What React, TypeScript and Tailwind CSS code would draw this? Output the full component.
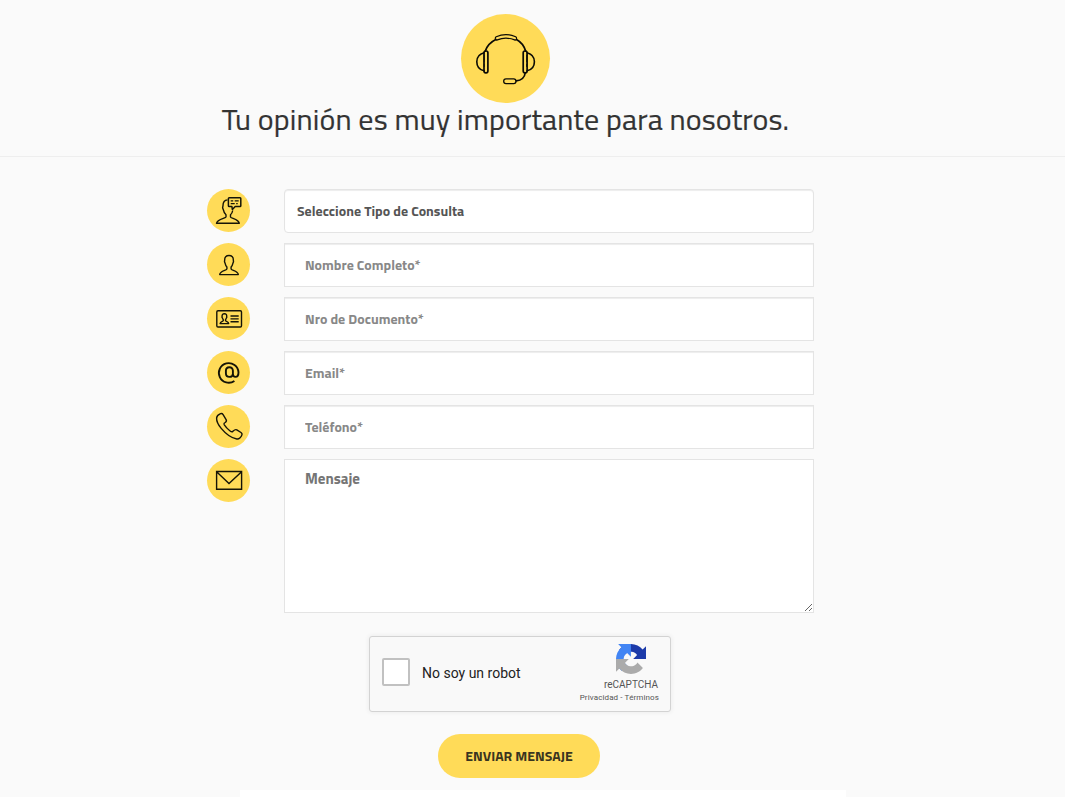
import type { ReactNode } from 'react';

function Badge({ children }: { children: ReactNode }) {
  return (
    <div className="size-[43px] shrink-0 rounded-full bg-[#ffdb58]">
      <svg viewBox="0 0 43 43" className="size-full" fill="none" stroke="#151407" strokeWidth="1.4" strokeLinejoin="round">
        {children}
      </svg>
    </div>
  );
}

const icons = {
  consult: (
    <>
      <path d="M20.500 10.900c-3 .3-4.500 2.200-4.500 5.700l-.4 2.200.9 2.400c.3 2.100 1.100 3.400 2.500 4.500v2.200c0 1.300-8.900 2.200-9.500 6.400h22.800c-.6-4.200-8.800-5-8.800-6.400v-2.200c1.200-1 1.900-2.400 2.200-4.200" />
      <path d="M22.200 8.700h10.800q.8 0 .8.800v7.300q0 .8-.8.800h-4.800l-2.800 2.900-.5-2.900h-2.700q-.8 0-.8-.8V9.500q0-.8.800-.8Z" strokeWidth="1.5" />
      <path d="M23.700 11.900h2.500m1.500 0h4M23.700 14.600h4m1.500 0h1.500" strokeWidth="1.2" />
    </>
  ),
  person: (
    <path d="M22 12.500c-3 0-4.400 1.800-4.300 4.300l-.2 2 .7 1.800c.3 1.500.8 2.500 1.700 3.400v2c0 1.500-6.900 1.500-7.200 5.600h18.600c-.3-4.100-7.200-4.100-7.200-5.600v-2c.9-.9 1.400-1.900 1.700-3.400l.7-1.800-.2-2c.1-2.500-1.300-4.300-4.300-4.300Z" />
  ),
  card: (
    <>
      <rect x="9.800" y="13.700" width="24.700" height="16.300" rx="1.200" />
      <path d="M17.400 16.700c-1.700 0-2.400 1-2.300 2.500l-.1 1 .5 1c.2.800.4 1.200.8 1.600v.8c0 .8-3 .8-3.200 3h8.600c-.2-2.200-3.200-2.200-3.200-3v-.8c.4-.4.600-.8.8-1.600l.5-1-.1-1c.1-1.500-.6-2.500-2.300-2.500Z" />
      <path d="M23.500 19h8.200M23.500 21.900h8.200M23.500 24.800h8.200" />
    </>
  ),
  at: (
    <path
      d="M27.400 29.900A9.800 9.800 0 1 1 31.500 21.300c0 3-1 4.600-3 4.600-1.800 0-2.600-1-2.600-2.800v-3.400c0-2.200-1.400-3.500-3.500-3.500s-3.500 1.400-3.500 3.600v2.500c0 2.200 1.400 3.600 3.500 3.600s3.500-1.200 3.500-3.200"
      strokeWidth="1.9"
    />
  ),
  phone: (
    <path d="M13.600 8.700c-1.900.8-3.900 2.700-4 4.300-.1 2.200 1.200 6.300 4.600 10.400 4.600 5.500 9.900 9.700 15.600 10.600 2.400.4 4.700-2.300 5.200-4.400.2-.8-.3-1.600-1-2.100l-4.200-2.600c-1.800-1-3 .7-4.100 1.700-.8.500-2-.2-2.900-.9-2-1.600-4-3.700-5.500-5.900-.7-1.100 0-1.800.9-2.300 1.100-.7 1.500-1.800.9-2.900l-3-5c-.6-.9-1.400-1.300-2.500-.9Z" />
  ),
  mail: <path d="M9.600 12.500h25v17.700h-25ZM9.600 12.800 22 24.500 34.600 12.800" strokeLinejoin="miter" />,
};

function Headset() {
  return (
    <div className="size-[89px] shrink-0 rounded-full bg-[#ffdb58]">
      <svg viewBox="0 0 89 89" className="size-full" fill="none" stroke="#0c0b05" strokeWidth="1.600" strokeLinejoin="round" strokeLinecap="round">
        <path d="M24.300 37C26 32 29.700 28 34.800 25.500M55.500 25.500C60 28 63.200 32 64.600 37" strokeWidth="1.800" />
        <path d="M35.200 22.800c6-2.700 13.500-2.700 19.500 0 1 .5 1 1.300.8 2.200-.3 1-1 1.300-1.900.9-5.500-2.200-11.800-2.200-17.300 0-.9.400-1.600.1-1.900-.9-.2-.9-.2-1.700.8-2.200Z" strokeWidth="1.200" />
        <rect x="23" y="37" width="3.900" height="21.800" rx="1.700" strokeWidth="1.700" />
        <rect x="62.200" y="37" width="3.900" height="21.800" rx="1.700" strokeWidth="1.700" />
        <path d="M23 38.800c-4.500 1.200-7.200 4.500-7.200 9s2.700 8 7.200 9M66.100 38.800c4.500 1.200 7.300 4.500 7.300 9s-2.800 8-7.300 9" />
        <path d="M23.200 41v7M23.200 50v2.500M65.500 41v7M65.500 50v2.500" strokeWidth=".8" />
        <path d="M64.200 59c-.5 4-3.500 7.300-9.100 7.900" strokeWidth="1.700" />
        <rect x="42.700" y="64.800" width="12.300" height="4.800" rx="2.300" strokeWidth="1.300" />
      </svg>
    </div>
  );
}

const control = 'block w-[530px] border border-[#e4e4e4] bg-white font-bold outline-none';

function Field({ icon, label }: { icon: ReactNode; label: string }) {
  return (
    <div className="flex gap-[34px]">
      <Badge>{icon}</Badge>
      <input
        placeholder={label}
        className={`${control} h-11 px-5 pb-0.5 text-[14px] text-[#888] shadow-[inset_0_1px_1px_rgba(0,0,0,0.075)] placeholder:text-[#888]`}
      />
    </div>
  );
}

export default function App() {
  return (
    <div className="h-[797px] overflow-hidden bg-[#fafafa] font-['Titillium_Web','Roboto',sans-serif] text-[#333]">
      <header className="flex h-[157px] flex-col items-center border-b border-[#eee] pt-3.5 pr-[54px]">
        <Headset />
        <h1 className="text-[30px] leading-[33px] tracking-[0.13px] whitespace-nowrap [-webkit-text-stroke:0.2px_#333]">
          Tu opinión es muy importante para nosotros.
        </h1>
      </header>
      <main className="pt-8">
        <form className="ml-[207px] flex w-[607px] flex-col gap-2.5">
          <div className="flex gap-[34px]">
            <Badge>{icons.consult}</Badge>
            <select
              className={`${control} h-11 appearance-none rounded-[4px] px-3 pb-px text-[14px] text-[#555] shadow-[inset_0_1px_1px_rgba(0,0,0,0.075)]`}
            >
              <option>Seleccione Tipo de Consulta</option>
            </select>
          </div>
          <Field icon={icons.person} label="Nombre Completo*" />
          <Field icon={icons.card} label="Nro de Documento*" />
          <Field icon={icons.at} label="Email*" />
          <Field icon={icons.phone} label="Teléfono*" />
          <div className="flex gap-[34px]">
            <Badge>{icons.mail}</Badge>
            <textarea
              placeholder="Mensaje"
              className={`${control} h-[154px] resize px-5 pt-2 text-[15px] leading-[21px] placeholder:text-[#757575]`}
            />
          </div>
        </form>
        <section className="mt-[23px] ml-[369px] flex h-[76px] w-[302px] rounded-[3px] border border-[#d3d3d3] bg-[#f9f9f9] font-['Roboto',sans-serif] shadow-[0_0_4px_1px_rgba(0,0,0,0.05)]">
          <div className="flex flex-1 items-center pb-1 pl-3">
            <span className="size-7 rounded-[2px] border-2 border-[#c1c1c1] bg-white" />
            <span className="mt-0.5 ml-3 text-[14px] text-[#222]">No soy un robot</span>
          </div>
          <div className="flex flex-col items-end pt-[7px] pr-[11px] text-[#555]">
            <svg viewBox="0 0 64 64" className="mr-[13px] size-[30px]">
              <path fill="#1c3aa9" d="M64 31.955l-.033-1.370V4.687l-7.160 7.160C50.948 4.674 42.033.093 32.050.093c-10.400 0-19.622 4.960-25.458 12.640l11.736 11.860a15.550 15.550 0 0 1 4.754-5.334c2.050-1.600 4.952-2.906 8.968-2.906.485 0 .86.057 1.135.163 4.976.393 9.288 3.140 11.828 7.124l-8.307 8.307L64 31.953" />
              <path fill="#4285f4" d="M31.862.094l-1.370.033H4.594l7.160 7.160C4.580 13.147 0 22.060 0 32.046c0 10.400 4.960 19.622 12.640 25.458L24.500 45.768a15.550 15.550 0 0 1-5.334-4.754c-1.600-2.050-2.906-4.952-2.906-8.968 0-.485.057-.86.163-1.135.393-4.976 3.140-9.288 7.124-11.828l8.307 8.307L31.860.095" />
              <path fill="#ababab" d="M.001 32.045l.033 1.370v25.898l7.160-7.160c5.860 7.173 14.774 11.754 24.760 11.754 10.400 0 19.622-4.960 25.458-12.640l-11.736-11.860a15.550 15.550 0 0 1-4.754 5.334c-2.050 1.600-4.952 2.906-8.968 2.906-.485 0-.86-.057-1.135-.163-4.976-.393-9.288-3.140-11.828-7.124l8.307-8.307c-10.522.040-22.400.066-27.295-.005" />
            </svg>
            <span className="mt-1 mr-px text-[10px] leading-[13px]">reCAPTCHA</span>
            <span className="pt-px text-[8px] leading-[12px] tracking-[0.12px]">Privacidad - Términos</span>
          </div>
        </section>
        <button className="mt-[22px] ml-[438px] block h-11 w-[162px] rounded-full bg-[#ffdb58] pb-0.5 text-[14px] font-bold text-[#3a3520]">
          ENVIAR MENSAJE
        </button>
        <div className="mt-3 ml-60 h-[7px] w-[606px] bg-white" />
      </main>
    </div>
  );
}
